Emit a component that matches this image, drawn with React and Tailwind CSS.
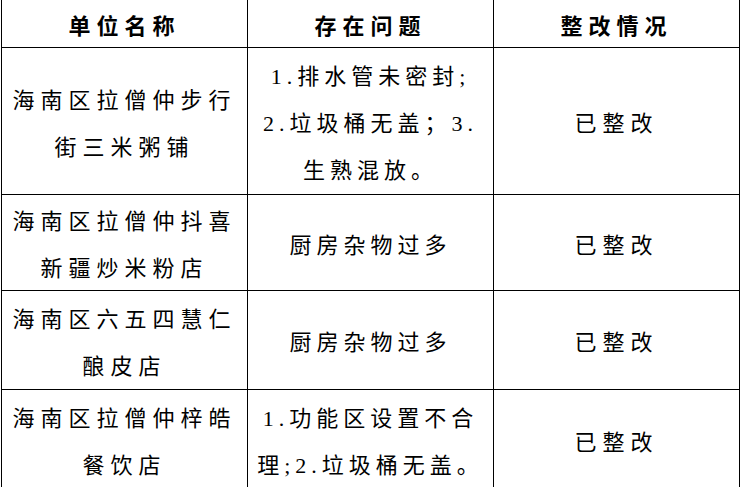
import React from "react";

const rows = [
  {
    h: "grid-rows-[147px]",
    name: ["海南区拉僧仲步行", "街三米粥铺"],
    issue: ["1.排水管未密封;", "2.垃圾桶无盖；3.", "生熟混放。"],
    status: "已整改",
  },
  {
    h: "grid-rows-[96px]",
    name: ["海南区拉僧仲抖喜", "新疆炒米粉店"],
    issue: ["厨房杂物过多"],
    status: "已整改",
  },
  {
    h: "grid-rows-[99px]",
    name: ["海南区六五四慧仁", "酿皮店"],
    issue: ["厨房杂物过多"],
    status: "已整改",
  },
  {
    h: "grid-rows-[100px]",
    name: ["海南区拉僧仲梓皓", "餐饮店"],
    issue: ["1.功能区设置不合", "理;2.垃圾桶无盖。"],
    status: "已整改",
  },
];

function Cell({ lines, bold, tight }) {
  return (
    <div
      className={
        "flex items-center justify-center border-r border-b border-black overflow-hidden " +
        (bold ? "pt-[6px]" : "pt-[5px]")
      }
    >
      <div
        className={
          "text-center text-[22px] text-black whitespace-nowrap " +
          (tight ? "tracking-[5px] " : "tracking-[6px] ") +
          (bold ? "font-bold leading-[40px]" : "font-normal leading-[47px]")
        }
      >
        {lines.map((l, i) => (
          <div key={i}>{l}</div>
        ))}
      </div>
    </div>
  );
}

export default function App() {
  return (
    <div className="w-[740px] h-[487px] overflow-hidden bg-white pl-px font-['Liberation_Serif','Noto_Sans_CJK_SC',serif]">
      <div className="border-l border-black w-[739px]">
        <div className="grid grid-cols-[246px_246px_246px] grid-rows-[48px]">
          <Cell lines={["单位名称"]} bold />
          <Cell lines={["存在问题"]} bold />
          <Cell lines={["整改情况"]} bold />
        </div>
        {rows.map((r, i) => (
          <div key={i} className={"grid grid-cols-[246px_246px_246px] " + r.h}>
            <Cell lines={r.name} />
            <Cell lines={r.issue} tight />
            <Cell lines={[r.status]} />
          </div>
        ))}
      </div>
    </div>
  );
}
